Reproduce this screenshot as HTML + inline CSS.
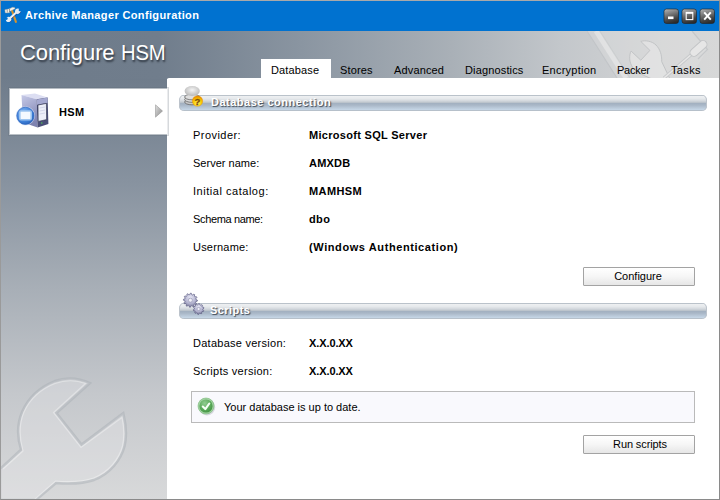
<!DOCTYPE html>
<html><head><meta charset="utf-8">
<style>
*{margin:0;padding:0;box-sizing:border-box}
html,body{width:720px;height:500px;overflow:hidden;background:#fff}
body{position:relative;font-family:"Liberation Sans",sans-serif;font-size:11px;color:#000}
.abs{position:absolute}
#win{position:absolute;left:0;top:0;width:720px;height:500px;border:1px solid #8a8a8a;border-top-color:#a9a9a9;border-left-color:#9a9a9a;overflow:hidden}
#title{position:absolute;z-index:2;left:0;top:0;width:718px;height:30px;background:#0072d0}
#ttext{position:absolute;left:24px;top:8px;color:#fff;font-weight:bold;font-size:11px;letter-spacing:0.36px;white-space:nowrap}
.wb{position:absolute;top:8px;width:15px;height:15px;border-radius:2px;background:radial-gradient(circle at 30% 20%,#9a9a9a 0%,#5a5a5a 55%,#262626 100%);border:1px solid #2a2a2a}
#hdr{position:absolute;left:0;top:30px;width:718px;height:48px;background:linear-gradient(to right,#6e7b8a 0%,#707d8c 22%,#8a95a1 41.8%,#a9b0b7 62.7%,#c3c7cb 78%,#d3d4d5 92%,#d7d8d8 100%)}
#left{position:absolute;left:0;top:78px;width:166px;height:421px;background:linear-gradient(to bottom,#6f7c8b 0%,#8893a0 25%,#a8afb7 50%,#c5c8cc 75%,#d8d9da 100%)}
#cfg{position:absolute;left:19px;top:39px;color:#fff;font-size:22px;letter-spacing:-0.1px;white-space:nowrap;text-shadow:1px 2px 2px rgba(25,32,42,.75)}
#cfg2{position:absolute;left:120px;top:39px;color:#fff;font-size:22px;letter-spacing:-0.2px;white-space:nowrap;transform:scaleX(0.92);transform-origin:0 0;text-shadow:1px 2px 2px rgba(25,32,42,.75)}
#panel{position:absolute;left:166px;top:77px;width:552px;height:421px;background:#fff;border-top-left-radius:2px}
#hsm{position:absolute;left:9px;top:88px;width:157px;height:45px;background:#fff;box-shadow:0 0 0 1px rgba(255,255,255,.5),0 0 0 2px rgba(90,102,116,.25)}
.tab{position:absolute;top:63px;white-space:nowrap;letter-spacing:0.15px}
#tabdb{position:absolute;left:260px;top:58px;width:70px;height:20px;background:#fff}
.bar{position:absolute;left:178px;width:528px;height:16px;border-radius:5px;box-shadow:inset 1px 0 0 #bcc3cb,inset -1px 0 0 #bcc3cb;background:linear-gradient(to bottom,#bac2ca 0px,#bac2ca 1px,#eef0f2 1px,#e6e9ec 3.5px,#d2d7dc 6px,#bcc4cc 7.5px,#a3b1c1 8.5px,#a8b6c6 10px,#c4d4e4 14.5px,#b6c0ca 15px,#b6c0ca 16px)}
.bart{position:absolute;color:#fff;font-weight:bold;white-space:nowrap;letter-spacing:0.35px;text-shadow:1px 1px 1px #3e4854}
.lbl{position:absolute;left:192px;white-space:nowrap;letter-spacing:0.2px}
.val{position:absolute;left:308px;white-space:nowrap;font-weight:bold;letter-spacing:0.2px}
.btn{position:absolute;left:582px;text-indent:-2px;width:112px;height:19px;border:1px solid #a3a3a3;border-radius:1px;background:linear-gradient(to bottom,#ffffff 0%,#f6f6f6 50%,#e6e6e6 100%);text-align:center;line-height:17px;letter-spacing:0.1px}
#status{position:absolute;left:190px;top:390px;width:504px;height:32px;border:1px solid #bababa;background:#f9f9fd}
</style></head><body>
<div id="win">
  <div id="title">
    
    <div id="ttext">Archive Manager Configuration</div>
  </div>
  <div id="hdr"></div>
  <div id="left"></div>
  <svg width="720" height="500" viewBox="0 0 720 500" style="position:absolute;left:-1px;top:-1px">
  <!-- left wrench watermark -->
  <path d="M0 469 L21 449.6 C17 437 17 424 22 412 C28 398 40 387 55 381 C66 377 79 378 90 383 L56.5 413 L81.5 444.5 L123.3 413 C126 424 127 436 124.6 446 C121 460 110 474 94 480 C82 484 68 484 56 483 L36 500 L0 500 Z" fill="#e6e7e8" fill-opacity="0.36" stroke="#aab0b6" stroke-opacity="0.5" stroke-width="2.4"/>
  <path d="M3 469 L23 451 C19 437 19 424 24 412 C30 399 41 389 55 383.5 C65 380 76 380 85.5 383.5 L53.5 412.5 L81 447.5 L122 417.5 C124 427 124.5 437 122.5 446 C119 459 109 472 93.5 478 C82 482 68 482 55.5 481 L34 500" fill="none" stroke="#ffffff" stroke-opacity="0.35" stroke-width="1.2"/>
  <!-- header tools watermark -->
  <path d="M587 31 L692 31 L707.5 49.5 L690 78 L617 78 Z" fill="#e4e4e4" fill-opacity="0.3"/>
  <path d="M587 31 L617 78" stroke="#c2c5c8" stroke-width="1.2" fill="none"/>
  <path d="M596 31 L626 78" stroke="#f0f0f0" stroke-opacity="0.5" stroke-width="5" fill="none"/>
  <path d="M600 31 L630 78" stroke="#c8cacc" stroke-opacity="0.7" stroke-width="1" fill="none"/>
  <path d="M692 31 L707.5 49.5 L698 59" stroke="#c6c8ca" stroke-width="1.2" fill="none"/>
  <path d="M640.8 41.4 C645 40 652 41 656 45 C660 49 662 55 661.7 61.6 L670 79 L652 79 L640.8 74 C634 71 630 65 629.7 58.8 C629.5 56 630 53 631.1 51.1 L640.8 60.2 L649.9 50.4 Z" fill="#e3e3e3" fill-opacity="0.85" stroke="#c2c4c6" stroke-width="1"/>
  <path d="M692 54 L664 78" stroke="#c6c8ca" stroke-width="3.2" fill="none"/>
  <path d="M692 54 L664 78" stroke="#e6e6e6" stroke-width="1.6" fill="none"/>
  <rect x="-10" y="-4" width="20" height="8" rx="4" transform="translate(698.5 48.5) rotate(-42)" fill="#e6e6e6" stroke="#c2c4c6" stroke-width="1"/>
  </svg>
  <div id="cfg">Configure</div>
  <div id="cfg2">HSM</div>
  <div id="panel"></div>
  <div id="tabdb"></div>
  <div class="tab" style="left:270px">Database</div>
  <div class="tab" style="left:339px">Stores</div>
  <div class="tab" style="left:393px">Advanced</div>
  <div class="tab" style="left:464px">Diagnostics</div>
  <div class="tab" style="left:541px;letter-spacing:0.25px">Encryption</div>
  <div class="tab" style="left:616px;letter-spacing:-0.25px">Packer</div>
  <div class="tab" style="left:670px;letter-spacing:0.35px">Tasks</div>
  <div id="hsm"></div>
  <div class="abs" style="left:58px;top:105px;font-weight:bold;white-space:nowrap;letter-spacing:0.4px">HSM</div>
  <div class="bar" style="top:94px"></div>
  <div class="bart" style="left:210px;top:95px;letter-spacing:0.5px">Database connection</div>
  <div class="lbl" style="top:128px;letter-spacing:0.45px">Provider:</div>
  <div class="val" style="top:128px;letter-spacing:0.3px">Microsoft SQL Server</div>
  <div class="lbl" style="top:156px;letter-spacing:0.02px">Server name:</div>
  <div class="val" style="top:156px">AMXDB</div>
  <div class="lbl" style="top:184px;letter-spacing:0.53px">Initial catalog:</div>
  <div class="val" style="top:184px;letter-spacing:0.4px">MAMHSM</div>
  <div class="lbl" style="top:212px;letter-spacing:-0.35px">Schema name:</div>
  <div class="val" style="top:212px;letter-spacing:0.4px">dbo</div>
  <div class="lbl" style="top:240px">Username:</div>
  <div class="val" style="top:240px;letter-spacing:0.59px">(Windows Authentication)</div>
  <div class="btn" style="top:266px;letter-spacing:0">Configure</div>
  <div class="bar" style="top:302px"></div>
  <div class="bart" style="left:209px;top:303px;letter-spacing:0.45px">Scripts</div>
  <div class="lbl" style="top:336px;letter-spacing:0.26px">Database version:</div>
  <div class="val" style="top:336px;letter-spacing:-0.1px">X.X.0.XX</div>
  <div class="lbl" style="top:364px;letter-spacing:0.27px">Scripts version:</div>
  <div class="val" style="top:364px;letter-spacing:-0.1px">X.X.0.XX</div>
  <div id="status"></div>
  <div class="abs" style="left:223px;top:400px;white-space:nowrap">Your database is up to date.</div>
  <div class="btn" style="top:434px;letter-spacing:-0.1px;text-indent:2px">Run scripts</div>
</div>
<svg id="ov" width="720" height="500" viewBox="0 0 720 500" style="position:absolute;left:0;top:0;z-index:3">
  <defs>
    <linearGradient id="wbg" x1="0.2" y1="0" x2="0.5" y2="1">
      <stop offset="0" stop-color="#b0b0b0"/>
      <stop offset="0.35" stop-color="#7c7c7c"/>
      <stop offset="0.75" stop-color="#444444"/>
      <stop offset="1" stop-color="#2c2c2c"/>
    </linearGradient>
    <linearGradient id="srvside" x1="0" y1="0" x2="1" y2="0">
      <stop offset="0" stop-color="#b8bce0"/>
      <stop offset="1" stop-color="#8c90b8"/>
    </linearGradient>
    <linearGradient id="srvleft" x1="0" y1="0" x2="0.3" y2="1">
      <stop offset="0" stop-color="#c6cae8"/>
      <stop offset="1" stop-color="#7e82b0"/>
    </linearGradient>
    <radialGradient id="bluec" cx="0.4" cy="0.35" r="0.7">
      <stop offset="0" stop-color="#8fc0f8"/>
      <stop offset="0.7" stop-color="#3d7fd8"/>
      <stop offset="1" stop-color="#2a62b8"/>
    </radialGradient>
    <linearGradient id="arrowg" x1="0" y1="0" x2="1" y2="1">
      <stop offset="0" stop-color="#e0e0e0"/>
      <stop offset="1" stop-color="#8a8a8a"/>
    </linearGradient>
    <radialGradient id="dbtop" cx="0.5" cy="0.4" r="0.6">
      <stop offset="0" stop-color="#f4f4f4"/>
      <stop offset="1" stop-color="#b8b8b8"/>
    </radialGradient>
    <radialGradient id="qg" cx="0.5" cy="0.75" r="0.7">
      <stop offset="0" stop-color="#fff060"/>
      <stop offset="0.6" stop-color="#f8c800"/>
      <stop offset="1" stop-color="#e88a00"/>
    </radialGradient>
    <radialGradient id="gearg" cx="0.5" cy="0.3" r="0.7">
      <stop offset="0" stop-color="#e6e6f4"/>
      <stop offset="0.6" stop-color="#b4b4d0"/>
      <stop offset="1" stop-color="#7c7c9c"/>
    </radialGradient>
    <radialGradient id="greeng" cx="0.4" cy="0.3" r="0.8">
      <stop offset="0" stop-color="#90cc90"/>
      <stop offset="0.6" stop-color="#58a858"/>
      <stop offset="1" stop-color="#3e8e3e"/>
    </radialGradient>
  </defs>
  <!-- title icon -->
  <line x1="11.8" y1="10.2" x2="15.9" y2="21.9" stroke="#d4922e" stroke-width="2.1" stroke-linecap="round"/>
  <path d="M4.8 9.8 L9.4 8.8 L12.4 7.3 L14.6 7.4 L15.1 8.8 L12.6 10 L9.6 11.4 L9.5 12.8 L5.3 13 Z" fill="#f4f2ec" stroke="#a09a8a" stroke-width="0.4"/>
  <path d="M7.2 9.6 L7.3 12.4 M9.5 9 L9.5 12" stroke="#6a665c" stroke-width="0.6"/>
  <line x1="9.4" y1="18.8" x2="16.9" y2="12" stroke="#eaeff5" stroke-width="2.2"/>
  <line x1="10.3" y1="19.8" x2="17.8" y2="13" stroke="#30306a" stroke-width="0.6"/>
  <circle cx="8.6" cy="19.4" r="2.7" fill="#e6ecf2"/>
  <circle cx="6.4" cy="18.6" r="1.3" fill="#0072d0"/>
  <circle cx="17.8" cy="11.2" r="2.7" fill="#e6ecf2"/>
  <circle cx="19.9" cy="10" r="1.3" fill="#0072d0"/>
  <path d="M9.6 22 Q11.2 21.4 11.4 20.4 M18.6 13.9 Q20.6 13.2 20.6 12.2" stroke="#30306a" stroke-width="0.6" fill="none"/>
  <!-- window buttons -->
  <rect x="664" y="9" width="14.5" height="14.5" rx="2.5" fill="url(#wbg)" stroke="#202020" stroke-width="0.6"/>
  <rect x="682" y="9" width="14.5" height="14.5" rx="2.5" fill="url(#wbg)" stroke="#202020" stroke-width="0.6"/>
  <rect x="700" y="9" width="14.5" height="14.5" rx="2.5" fill="url(#wbg)" stroke="#202020" stroke-width="0.6"/>
  <rect x="668" y="16.5" width="5.5" height="2.6" fill="#fff"/>
  <rect x="686.2" y="12.4" width="6.6" height="7.2" fill="none" stroke="#fff" stroke-width="1.1"/>
  <rect x="686" y="12" width="7" height="1.8" fill="#fff"/>
  <path d="M704.2 12.4 L710.8 19.6 M710.8 12.4 L704.2 19.6" stroke="#fff" stroke-width="2"/>
  <!-- HSM server icon -->
  <path d="M21.5 95 L35 93.6 L47.6 97.4 L36.6 99.2 Z" fill="#dcdef2"/>
  <path d="M21.5 95 L36.6 99.2 L37.6 127.4 L23 122.5 Z" fill="url(#srvleft)"/>
  <path d="M36.6 99.2 L47.6 97.4 L48.4 124 L37.6 127.4 Z" fill="#4a4e76"/>
  <path d="M36.8 99.4 L47.5 97.6 L47.6 103 L37 104.8 Z" fill="#a4a8d0"/>
  <path d="M38 105 L46.4 103.4 L46.6 119.6 L38.2 121.4 Z" fill="#eceef8" stroke="#2e324c" stroke-width="0.6"/>
  <path d="M39.5 108 L45 107 M39.5 111 L45 110 M39.5 114 L45 113" stroke="#b8bcd8" stroke-width="0.5"/>
  <circle cx="41.8" cy="123" r="0.7" fill="#50d050"/>
  <circle cx="25.4" cy="115.8" r="9.6" fill="#d4e4fa" fill-opacity="0.7"/>
  <circle cx="25.4" cy="115.8" r="8.6" fill="url(#bluec)" stroke="#2c64c0" stroke-width="0.7"/>
  <rect x="19.8" y="111" width="11.4" height="8.8" rx="1.2" fill="#f4f9ff" stroke="#9cc4f0" stroke-width="1.6"/>
  <!-- arrow -->
  <path d="M155.5 104.8 L162.5 111 L155.5 117.2 Z" fill="url(#arrowg)" stroke="#8a8a8a" stroke-width="0.5"/>
  <!-- database icon -->
  <g>
    <ellipse cx="192" cy="102" rx="7.4" ry="2.8" fill="#c8c8c8" stroke="#6a6a6a" stroke-width="0.8"/>
    <ellipse cx="192" cy="99.5" rx="7.4" ry="2.8" fill="#d8d8d8" stroke="#6a6a6a" stroke-width="0.8"/>
    <ellipse cx="192" cy="97" rx="7.4" ry="2.8" fill="#dedede" stroke="#6a6a6a" stroke-width="0.8"/>
    <ellipse cx="192.2" cy="91" rx="7.6" ry="5" fill="url(#dbtop)"/>
    <circle cx="197.5" cy="101" r="5.2" fill="url(#qg)" stroke="#e89000" stroke-width="0.4"/>
    <text x="197.5" y="104.6" font-family="Liberation Sans" font-weight="bold" font-size="9.5" fill="#7c4c0c" stroke="#7c4c0c" stroke-width="0.3" text-anchor="middle">?</text>
  </g>
  <!-- gears -->
  <g fill="url(#gearg)" stroke="#5e5e84" stroke-width="0.7">
    <path d="M190.40 293.20 L191.31 293.26 L191.85 294.79 L192.54 295.03 L193.90 294.14 L194.66 294.65 L194.36 296.24 L194.84 296.79 L196.46 296.70 L196.87 297.52 L195.81 298.75 L195.95 299.47 L197.40 300.20 L197.34 301.11 L195.81 301.65 L195.57 302.34 L196.46 303.70 L195.95 304.46 L194.36 304.16 L193.81 304.64 L193.90 306.26 L193.08 306.67 L191.85 305.61 L191.13 305.75 L190.40 307.20 L189.49 307.14 L188.95 305.61 L188.26 305.37 L186.90 306.26 L186.14 305.75 L186.44 304.16 L185.96 303.61 L184.34 303.70 L183.93 302.88 L184.99 301.65 L184.85 300.93 L183.40 300.20 L183.46 299.29 L184.99 298.75 L185.23 298.06 L184.34 296.70 L184.85 295.94 L186.44 296.24 L186.99 295.76 L186.90 294.14 L187.72 293.73 L188.95 294.79 L189.67 294.65 Z"/>
    <path d="M198.60 303.60 L199.44 303.67 L199.93 304.91 L200.55 305.17 L201.77 304.63 L202.42 305.18 L202.08 306.47 L202.43 307.05 L203.74 307.33 L203.93 308.16 L202.90 309.00 L202.85 309.67 L203.74 310.67 L203.41 311.45 L202.08 311.53 L201.64 312.04 L201.77 313.37 L201.05 313.81 L199.93 313.09 L199.27 313.25 L198.60 314.40 L197.76 314.33 L197.27 313.09 L196.65 312.83 L195.43 313.37 L194.78 312.82 L195.12 311.53 L194.77 310.95 L193.46 310.67 L193.27 309.84 L194.30 309.00 L194.35 308.33 L193.46 307.33 L193.79 306.55 L195.12 306.47 L195.56 305.96 L195.43 304.63 L196.15 304.19 L197.27 304.91 L197.93 304.75 Z"/>
  </g>
  <g fill="#f0f0f8" stroke="#8080a0" stroke-width="0.5">
    <circle cx="190.4" cy="300.2" r="2"/>
    <circle cx="198.6" cy="309" r="1.6"/>
  </g>
  <!-- check -->
  <circle cx="207" cy="407.3" r="8.2" fill="#a4a4b4" fill-opacity="0.4"/>
  <circle cx="206" cy="406" r="8" fill="#a2d2a2" stroke="#78b878" stroke-width="0.6"/>
  <circle cx="206" cy="406" r="6.6" fill="url(#greeng)"/>
  <path d="M202.8 406.6 L205.3 409.1 L209.3 403.5" fill="none" stroke="#f6fff6" stroke-width="2.1" stroke-linecap="round" stroke-linejoin="round"/>
</svg>
</body></html>
